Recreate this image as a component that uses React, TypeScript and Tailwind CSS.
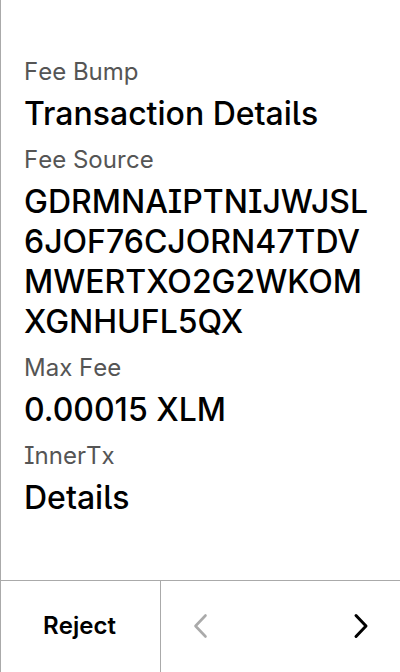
const fields = [
  { label: "Fee Bump", value: "Transaction Details" },
  { label: "Fee Source", value: "GDRMNAIPTNIJWJSL6JOF76CJORN47TDVMWERTXO2G2WKOMXGNHUFL5QX" },
  { label: "Max Fee", value: "0.00015 XLM" },
  { label: "InnerTx", value: "Details" },
];

export default function App() {
  return (
    <main className="flex min-h-screen flex-col border-l border-[#aaaaaa] bg-white font-['Inter',sans-serif] text-black">
      <dl className="flex grow flex-col gap-[10px] px-[23px] pt-14 [font-feature-settings:'cv05','cv08']">
        {fields.map((field) => (
          <div key={field.label}>
            <dt className="text-2xl leading-8 text-[#555555] [font-kerning:none]">{field.label}</dt>
            <dd className="mt-[6px] text-[32px] leading-10 font-medium break-all">{field.value}</dd>
          </div>
        ))}
      </dl>
      <footer className="flex h-23 border-t border-[#aaaaaa]">
        <button type="button" className="w-40 border-r border-[#aaaaaa] pr-[2px] pb-[2px] text-2xl font-semibold [font-kerning:none]">
          Reject
        </button>
        <nav className="flex grow items-center justify-between px-7 pb-[2px]">
          <button type="button" aria-label="Previous" disabled className="text-[#aaaaaa]">
            <svg width="24" height="32" viewBox="0 0 24 32" fill="none" stroke="currentColor" strokeWidth="2.6" strokeLinecap="round" strokeLinejoin="round">
              <path d="M16.5 5.5 6.5 16 16.5 26.5" />
            </svg>
          </button>
          <button type="button" aria-label="Next">
            <svg width="24" height="32" viewBox="0 0 24 32" fill="none" stroke="currentColor" strokeWidth="3" strokeLinecap="round" strokeLinejoin="round">
              <path d="M8 5.5 18 16 8 26.5" />
            </svg>
          </button>
        </nav>
      </footer>
    </main>
  );
}
